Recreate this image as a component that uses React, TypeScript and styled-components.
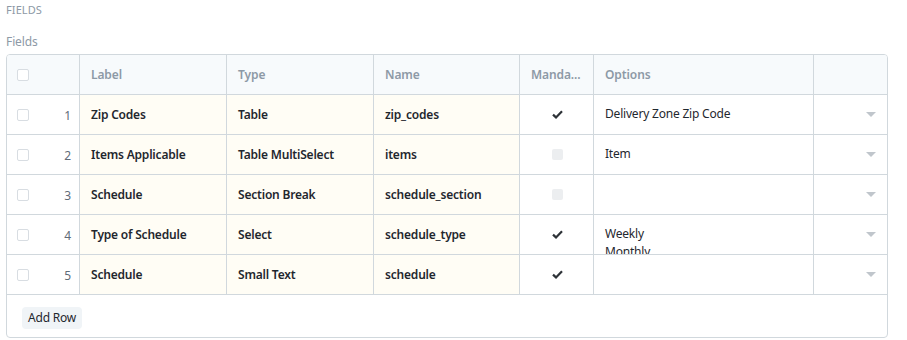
import styled, { createGlobalStyle } from "styled-components";

const GlobalStyle = createGlobalStyle`
  body {
    margin: 0;
    background: #ffffff;
    font-family: "Noto Sans", "Open Sans", sans-serif;
    color: #1f272e;
  }
`;

const ScPage = styled.div`
  padding: 3px 19px 0 6px;
`;

const ScSection = styled.div`
  font-size: 11px;
  color: #8d99a6;
  letter-spacing: 0.1px;
  line-height: 14px;
`;

const ScLabel = styled.div`
  margin-top: 17px;
  font-size: 12px;
  color: #8d99a6;
  line-height: 16px;
  letter-spacing: -0.1px;
`;

const ScGrid = styled.div`
  margin-top: 4px;
  border: 1px solid #d1d8dd;
  border-radius: 4px;
  overflow: hidden;
`;

const ScRow = styled.div<{ $head?: boolean }>`
  display: grid;
  grid-template-columns: 73px 147px 147px 146px 74px 220px 1fr;
  height: 40px;
  box-sizing: border-box;
  border-bottom: 1px solid #d1d8dd;
  background: ${(p) => (p.$head ? "#f7fafc" : "#ffffff")};
  color: ${(p) => (p.$head ? "#8d99a6" : "#1f272e")};
`;

const ScCell = styled.div<{ $cream?: boolean; $bold?: boolean; $center?: boolean }>`
  display: flex;
  align-items: center;
  justify-content: ${(p) => (p.$center ? "center" : "flex-start")};
  padding: 0 10px 0 11px;
  border-right: 1px solid #d1d8dd;
  font-size: 12px;
  letter-spacing: -0.2px;
  font-weight: ${(p) => (p.$bold ? 600 : 400)};
  background: ${(p) => (p.$cream ? "#fffdf5" : "transparent")};
  white-space: nowrap;
  overflow: hidden;

  &:last-child {
    border-right: none;
  }
`;

const ScHeadCell = styled(ScCell)`
  font-weight: 600;
  letter-spacing: -0.1px;
`;

const ScIndexCell = styled(ScCell)`
  justify-content: space-between;
  padding: 1px 8px 0 10px;
  color: #5f6b78;
`;

const ScOptions = styled(ScCell)`
  display: block;
  padding-top: 10px;
  line-height: 18px;
  white-space: pre;
`;

const ScCheckbox = styled.span`
  width: 10px;
  height: 10px;
  border: 1px solid #d8dde2;
  border-radius: 2px;
  background: #fff;
`;

const ScDisabledBox = styled.span`
  width: 11px;
  height: 11px;
  border-radius: 2px;
  background: #eceef0;
`;

const ScCaret = styled.span`
  margin-left: auto;
  margin-right: 1px;
  width: 0;
  height: 0;
  border-left: 5px solid transparent;
  border-right: 5px solid transparent;
  border-top: 5px solid #c0c6cc;
`;

const ScFooter = styled.div`
  height: 42px;
  padding: 10px 15px;
  box-sizing: border-box;
`;

const ScButton = styled.button`
  height: 22px;
  padding: 0 6px;
  border: 0;
  border-radius: 4px;
  background: #f0f4f7;
  color: #1f272e;
  font-family: inherit;
  font-size: 12px;
  letter-spacing: -0.2px;
`;

const Check = () => (
  <svg width="11" height="9" viewBox="0 0 11 9">
    <path d="M1 4.6 L4 7.4 L10 1.2" fill="none" stroke="#2e3338" strokeWidth="2.2" />
  </svg>
);

type Field = {
  label: string;
  type: string;
  name: string;
  mandatory: boolean;
  options: string;
};

const fields: Field[] = [
  { label: "Zip Codes", type: "Table", name: "zip_codes", mandatory: true, options: "Delivery Zone Zip Code" },
  { label: "Items Applicable", type: "Table MultiSelect", name: "items", mandatory: false, options: "Item" },
  { label: "Schedule", type: "Section Break", name: "schedule_section", mandatory: false, options: "" },
  { label: "Type of Schedule", type: "Select", name: "schedule_type", mandatory: true, options: "Weekly\nMonthly" },
  { label: "Schedule", type: "Small Text", name: "schedule", mandatory: true, options: "" },
];

export default function App() {
  return (
    <>
      <GlobalStyle />
      <ScPage>
        <ScSection>FIELDS</ScSection>
        <ScLabel>Fields</ScLabel>
        <ScGrid>
          <ScRow $head>
            <ScIndexCell>
              <ScCheckbox />
            </ScIndexCell>
            <ScHeadCell>Label</ScHeadCell>
            <ScHeadCell>Type</ScHeadCell>
            <ScHeadCell>Name</ScHeadCell>
            <ScHeadCell>Manda...</ScHeadCell>
            <ScHeadCell>Options</ScHeadCell>
            <ScHeadCell />
          </ScRow>
          {fields.map((f, i) => (
            <ScRow key={i}>
              <ScIndexCell>
                <ScCheckbox />
                {i + 1}
              </ScIndexCell>
              <ScCell $cream $bold>{f.label}</ScCell>
              <ScCell $cream $bold>{f.type}</ScCell>
              <ScCell $cream $bold>{f.name}</ScCell>
              <ScCell $center>{f.mandatory ? <Check /> : <ScDisabledBox />}</ScCell>
              <ScOptions>{f.options}</ScOptions>
              <ScCell>
                <ScCaret />
              </ScCell>
            </ScRow>
          ))}
          <ScFooter>
            <ScButton>Add Row</ScButton>
          </ScFooter>
        </ScGrid>
      </ScPage>
    </>
  );
}
